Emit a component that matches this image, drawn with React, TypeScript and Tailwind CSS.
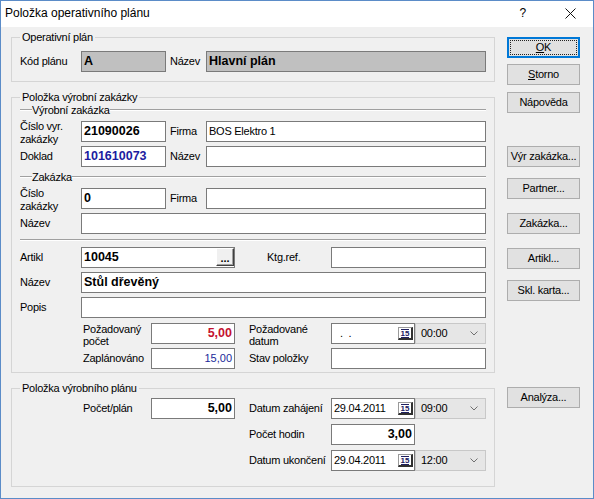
import React from 'react';

const B = 'font-bold text-[12.5px] tracking-normal';

function Box({ className = '', gray, children }: { className?: string; gray?: boolean; children?: React.ReactNode }) {
  return (
    <div
      className={`h-[21px] border border-[#7a7a7a] flex items-center px-[2px] whitespace-nowrap overflow-hidden ${gray ? 'bg-[#c0c0c0]' : 'bg-white'} ${className}`}
    >
      {children}
    </div>
  );
}

function Group({ title, className = '', children }: { title: string; className?: string; children?: React.ReactNode }) {
  return (
    <fieldset className={`border border-[#d5d5d5] pl-[8px] pr-[8px] ${className}`}>
      <legend className="px-[2px] leading-[14px]">{title}</legend>
      {children}
    </fieldset>
  );
}

function Rule({ className = '' }: { className?: string }) {
  return <div className={`h-[2px] border-t border-[#a0a0a0] border-b border-b-white ${className}`} />;
}

function SubHead({ title, className = '' }: { title: string; className?: string }) {
  return (
    <div className={`flex items-center h-[12px] ${className}`}>
      <Rule className="w-[12px]" />
      <span className="leading-[12px]">{title}</span>
      <Rule className="flex-1" />
    </div>
  );
}

function CalIcon() {
  return (
    <span className="ml-auto w-[15px] h-[13px] flex items-center justify-center bg-white border border-t-[#9a9a9a] border-l-[#9a9a9a] border-r-2 border-b-2 border-r-[#303030] border-b-[#303030] text-[8px] leading-none font-bold tracking-normal text-[#202060]">
      <span className="border-t border-b border-[#202060] leading-[7px]">15</span>
    </span>
  );
}

function DateBox({ value }: { value?: string }) {
  return (
    <Box className="pr-[1px]">
      {value ? <span>{value}</span> : <span className="pl-[6px] whitespace-pre">{'.  .'}</span>}
      <CalIcon />
    </Box>
  );
}

function TimeBox({ value }: { value: string }) {
  return (
    <div className="h-[21px] border border-[#c8c8c8] bg-[#e6e6e6] flex items-center pl-[5px] pr-[7px]">
      <span>{value}</span>
      <svg className="ml-auto" width="8" height="5" viewBox="0 0 8 5">
        <polyline points="0.5,0.5 4,4 7.5,0.5" fill="none" stroke="#707070" strokeWidth="1" />
      </svg>
    </div>
  );
}

function Btn({ className = '', children }: { className?: string; children?: React.ReactNode }) {
  return (
    <button className={`h-[21px] w-full border border-[#adadad] bg-[#e1e1e1] flex items-center justify-center whitespace-nowrap ${className}`}>
      {children}
    </button>
  );
}

export default function App() {
  return (
    <div className="w-[594px] h-[499px] border border-[#5b8cc8] bg-[#f0f0f0] flex flex-col overflow-hidden font-['Liberation_Sans',Arial,sans-serif] text-[11px] leading-[13px] tracking-[-0.25px] text-black">
      {/* title bar */}
      <div className="h-[26px] shrink-0 bg-white flex items-center pb-[1px]">
        <span className="ml-[4px] text-[12px] tracking-normal">Položka operativního plánu</span>
        <span className="ml-auto text-[12px]">?</span>
        <svg className="ml-[39px] mr-[17px]" width="11" height="11" viewBox="0 0 11 11">
          <path d="M0.5 0.5 L10.5 10.5 M10.5 0.5 L0.5 10.5" stroke="#111" strokeWidth="1" />
        </svg>
      </div>

      <div className="flex flex-1 pl-[10px]">
        {/* left column */}
        <div className="w-[484px] flex flex-col">
          <Group title="Operativní plán" className="mt-[3px] pb-[9px]">
            <div className="mt-[7px] flex h-[21px] items-center">
              <div className="w-[61px]">Kód plánu</div>
              <Box gray className={`w-[85px] ${B}`}>A</Box>
              <div className="w-[40px] pl-[4px]">Název</div>
              <Box gray className={`flex-1 ${B}`}>Hlavní plán</Box>
            </div>
          </Group>

          <Group title="Položka výrobní zakázky" className="mt-[8px] pb-[3px]">
            <SubHead title="Výrobní zakázka" />
            <div className="mt-[5px] flex h-[21px] items-center">
              <div className="w-[61px] self-start -mt-[1px]">Číslo vyr.<br />zakázky</div>
              <Box className={`w-[85px] ${B}`}>21090026</Box>
              <div className="w-[40px] pl-[4px]">Firma</div>
              <Box className="flex-1">BOS Elektro 1</Box>
            </div>
            <div className="mt-[4px] flex h-[21px] items-center">
              <div className="w-[61px]">Doklad</div>
              <Box className={`w-[85px] ${B} text-[#1c1ca0]`}>101610073</Box>
              <div className="w-[40px] pl-[4px]">Název</div>
              <Box className="flex-1" />
            </div>
            <SubHead title="Zakázka" className="mt-[4px]" />
            <div className="mt-[5px] flex h-[21px] items-center">
              <div className="w-[61px] self-start -mt-[1px]">Číslo<br />zakázky</div>
              <Box className={`w-[85px] ${B}`}>0</Box>
              <div className="w-[40px] pl-[4px]">Firma</div>
              <Box className="flex-1" />
            </div>
            <div className="mt-[4px] flex h-[21px] items-center">
              <div className="w-[61px]">Název</div>
              <Box className="flex-1" />
            </div>
            <Rule className="mt-[5px]" />
            <div className="mt-[6px] flex h-[21px] items-center">
              <div className="w-[61px]">Artikl</div>
              <Box className="w-[154px] pr-0 items-start">
                <span className={`${B} self-center`}>10045</span>
                <span className="ml-auto h-[18px] w-[18px] flex items-center justify-center pt-[2px] bg-[#f0f0f0] border border-t-white border-l-white border-r-[#404040] border-b-[#404040] shadow-[inset_-1px_-1px_0_#a0a0a0] font-bold leading-none tracking-normal">
                  ...
                </span>
              </Box>
              <div className="w-[96px] pl-[32px]">Ktg.ref.</div>
              <Box className="flex-1" />
            </div>
            <div className="mt-[4px] flex h-[21px] items-center">
              <div className="w-[61px]">Název</div>
              <Box className={`flex-1 ${B}`}>Stůl dřevěný</Box>
            </div>
            <div className="mt-[4px] flex h-[21px] items-center">
              <div className="w-[61px]">Popis</div>
              <Box className="flex-1" />
            </div>
            <div className="mt-[5px] pl-[63px] grid grid-cols-[68px_84px_14px_82px_84px_71px] grid-rows-[21px_21px] gap-y-[4px] items-center">
              <div className="self-start leading-[12px]">Požadovaný<br />počet</div>
              <Box className={`justify-end ${B} text-[#c4122f]`}>5,00</Box>
              <div />
              <div className="self-start leading-[12px]">Požadované<br />datum</div>
              <DateBox />
              <TimeBox value="00:00" />
              <div>Zaplánováno</div>
              <Box className="justify-end text-[#1a2a9a] tracking-normal">15,00</Box>
              <div />
              <div>Stav položky</div>
              <Box className="col-span-2" />
            </div>
          </Group>

          <Group title="Položka výrobního plánu" className="mt-[8px] pb-[15px]">
            <div className="mt-[3px] pl-[63px] grid grid-cols-[68px_84px_14px_82px_84px_71px] grid-rows-[21px_21px_21px] gap-y-[5px] items-center">
              <div>Počet/plán</div>
              <Box className={`justify-end ${B}`}>5,00</Box>
              <div />
              <div>Datum zahájení</div>
              <DateBox value="29.04.2011" />
              <TimeBox value="09:00" />
              <div className="col-start-4">Počet hodin</div>
              <Box className={`justify-end ${B}`}>3,00</Box>
              <div />
              <div className="col-start-4">Datum ukončení</div>
              <DateBox value="29.04.2011" />
              <TimeBox value="12:00" />
            </div>
          </Group>
        </div>

        {/* right buttons */}
        <div className="ml-[12px] w-[73px] flex flex-col">
          <button className="mt-[10px] h-[21px] w-full border-2 border-[#0078d7] bg-[#e1e1e1] p-[1px]">
            <span className="h-full w-full flex items-center justify-center border border-dotted border-[#222]">
              <span className="underline">O</span>K
            </span>
          </button>
          <Btn className="mt-[6px]">
            <span className="underline">S</span>torno
          </Btn>
          <Btn className="mt-[7px]">Nápověda</Btn>
          <Btn className="mt-[33px]">Výr zakázka...</Btn>
          <Btn className="mt-[11px]">Partner...</Btn>
          <Btn className="mt-[14px]">Zakázka...</Btn>
          <Btn className="mt-[14px]">Artikl...</Btn>
          <Btn className="mt-[11px]">Skl. karta...</Btn>
          <Btn className="mt-[86px]">Analýza...</Btn>
        </div>
      </div>
    </div>
  );
}
